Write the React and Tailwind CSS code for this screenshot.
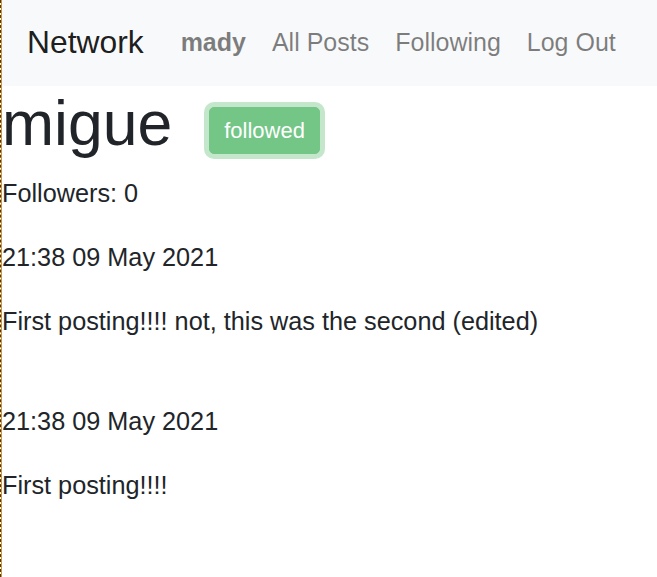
import React from "react";

const posts = [
  { id: 2, time: "21:38 09 May 2021", body: "First posting!!!! not, this was the second (edited)" },
  { id: 1, time: "21:38 09 May 2021", body: "First posting!!!!" },
];

const links = ["All Posts", "Following", "Log Out"];

export default function App() {
  return (
    <div className="min-h-[577px] border-l border-dashed border-[#3a3a3a] bg-white font-['Liberation_Sans',Arial,sans-serif] text-[#212529]">
      <div className="min-h-[577px] border-l border-[#e0901c]">
        {/* Navbar */}
        <nav className="flex h-[86px] items-center bg-[#f8f9fa] px-[25px]">
          <a className="mr-[37px] text-[31.8px] text-black/90" href="#">
            Network
          </a>
          <div className="flex items-center gap-[26px] text-[25px] text-black/50">
            <a className="font-bold" href="#">
              mady
            </a>
            {links.map((l) => (
              <a key={l} href="#">
                {l}
              </a>
            ))}
          </div>
        </nav>

        {/* Profile header */}
        <div className="mb-[12.5px] flex items-start">
          <h1 className="text-[62.5px] leading-[75px]">migue</h1>
          <button
            type="button"
            disabled
            className="ml-[37px] mt-[21px] h-[47px] rounded-[5px] border border-[#73c686] bg-[#73c686] px-[14px] text-[22px] leading-[33px] text-white shadow-[0_0_0_5px_#c4e7cc]"
          >
            followed
          </button>
        </div>

        <p className="mb-[25.6px] text-[25.25px] leading-[38.4px]">Followers: 0</p>

        {posts.map((p) => (
          <div key={p.id} className="pb-[36px]">
            <p className="mb-[25.6px] text-[25.25px] leading-[38.4px]">{p.time}</p>
            <p className="mb-[25.6px] text-[25.25px] leading-[38.4px]">{p.body}</p>
          </div>
        ))}
      </div>
    </div>
  );
}
